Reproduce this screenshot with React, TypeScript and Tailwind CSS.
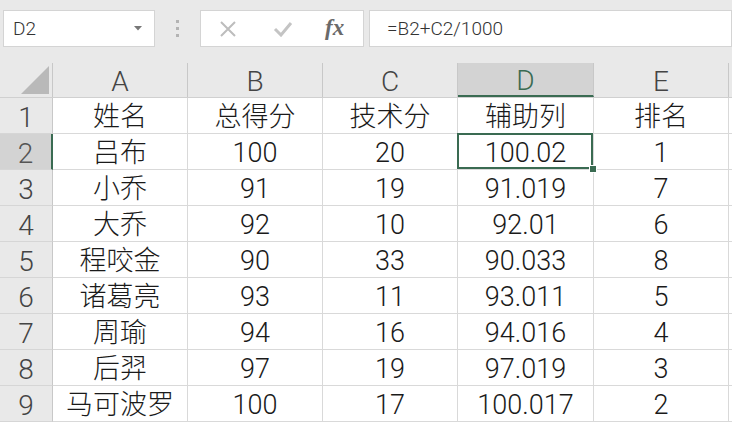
import React from "react";

const rows = [
  ["姓名", "总得分", "技术分", "辅助列", "排名"],
  ["吕布", "100", "20", "100.02", "1"],
  ["小乔", "91", "19", "91.019", "7"],
  ["大乔", "92", "10", "92.01", "6"],
  ["程咬金", "90", "33", "90.033", "8"],
  ["诸葛亮", "93", "11", "93.011", "5"],
  ["周瑜", "94", "16", "94.016", "4"],
  ["后羿", "97", "19", "97.019", "3"],
  ["马可波罗", "100", "17", "100.017", "2"],
];

const cols = ["A", "B", "C", "D", "E"];
const widths = ["w-[135px]", "w-[135px]", "w-[135px]", "w-[136px]", "w-[135px]"];

export default function App() {
  return (
    <div
      className="w-[732px] h-[426px] overflow-hidden bg-white text-[#1a1a1a] font-light"
      style={{ fontFamily: 'Roboto, "Noto Sans CJK SC", sans-serif' }}
    >
      {/* formula bar */}
      <div className="h-[63px] bg-[#e9e9e9] flex items-start pt-[10px] pl-[3px]">
        <div className="w-[152px] h-[37px] bg-white border border-[#d4d4d4] flex items-center justify-between pl-[9px] pr-[12px]">
          <span className="text-[19px] leading-none text-[#333]">D2</span>
          <svg width="8" height="5" viewBox="0 0 8 5">
            <polygon points="0,0 8,0 4,4.5" fill="#777" />
          </svg>
        </div>
        <div className="w-[45px] h-[37px] flex flex-col items-center justify-center gap-[4px]">
          <span className="w-[3px] h-[3px] bg-[#b3b3b3]" />
          <span className="w-[3px] h-[3px] bg-[#b3b3b3]" />
          <span className="w-[3px] h-[3px] bg-[#b3b3b3]" />
        </div>
        <div className="w-[164px] h-[37px] bg-white border border-[#d4d4d4] flex items-center">
          <svg className="ml-[18px]" width="18" height="16" viewBox="0 0 18 16">
            <path d="M2 1 L16 15 M16 1 L2 15" stroke="#bdbdbd" strokeWidth="2" fill="none" />
          </svg>
          <svg className="ml-[36px]" width="20" height="16" viewBox="0 0 20 16">
            <path d="M2 8 L8 14 L18 2" stroke="#c4c4c4" strokeWidth="3" fill="none" />
          </svg>
          <span
            className="ml-[32px] text-[23px] leading-none italic font-bold text-[#6a6a6a] -mt-[3px]"
            style={{ fontFamily: '"Liberation Serif", serif' }}
          >
            fx
          </span>
        </div>
        <div className="ml-[5px] flex-1 h-[37px] bg-white border border-[#d4d4d4] flex items-center pl-[17px]">
          <span className="text-[19px] leading-none text-[#333]">=B2+C2/1000</span>
        </div>
      </div>

      {/* column headers */}
      <div className="flex h-[35px] bg-[#e9e9e9] border-b border-[#d0d0d0]">
        <div className="w-[53px] h-full border-r border-[#c8c8c8] flex items-end justify-end pr-[3px] pb-[3px]">
          <svg width="28" height="28" viewBox="0 0 28 28">
            <polygon points="28,0 28,28 0,28" fill="#b9b9b9" />
          </svg>
        </div>
        {cols.map((c, i) => (
          <div
            key={c}
            className={
              widths[i] +
              " h-full pt-[4px] border-r border-[#c8c8c8] flex items-center justify-center text-[28px] leading-none " +
              (c === "D"
                ? "bg-[#d3d3d3] text-[#3a6b52] border-b-2 border-b-[#3a6b52]"
                : "text-[#444]")
            }
          >
            {c}
          </div>
        ))}
        <div className="flex-1" />
      </div>

      {/* rows */}
      {rows.map((r, ri) => (
        <div key={ri} className="flex h-[36px]">
          <div
            className={
              "w-[53px] h-full pt-[4px] border-b border-[#d6d6d6] flex items-center justify-center text-[28px] leading-none " +
              (ri === 1
                ? "bg-[#d3d3d3] text-[#555] border-r-2 border-r-[#3a6b52]"
                : "bg-[#e9e9e9] text-[#444] border-r border-r-[#c8c8c8]")
            }
          >
            {ri + 1}
          </div>
          {r.map((v, ci) => (
            <div
              key={ci}
              className={
                widths[ci] +
                " relative h-full pt-[4px] border-r border-b border-[#d9d9d9] flex items-center justify-center text-[27px] leading-none"
              }
            >
              {v}
              {ri === 1 && ci === 3 && (
                <>
                  <div className="absolute -left-[1px] -top-[1px] right-0 bottom-0 border-2 border-[#3a6b52]" />
                  <div className="absolute z-10 -right-[4px] -bottom-[4px] w-[8px] h-[8px] bg-[#3a6b52] border border-white" />
                </>
              )}
            </div>
          ))}
          <div className="flex-1 border-b border-[#d9d9d9]" />
        </div>
      ))}
    </div>
  );
}
